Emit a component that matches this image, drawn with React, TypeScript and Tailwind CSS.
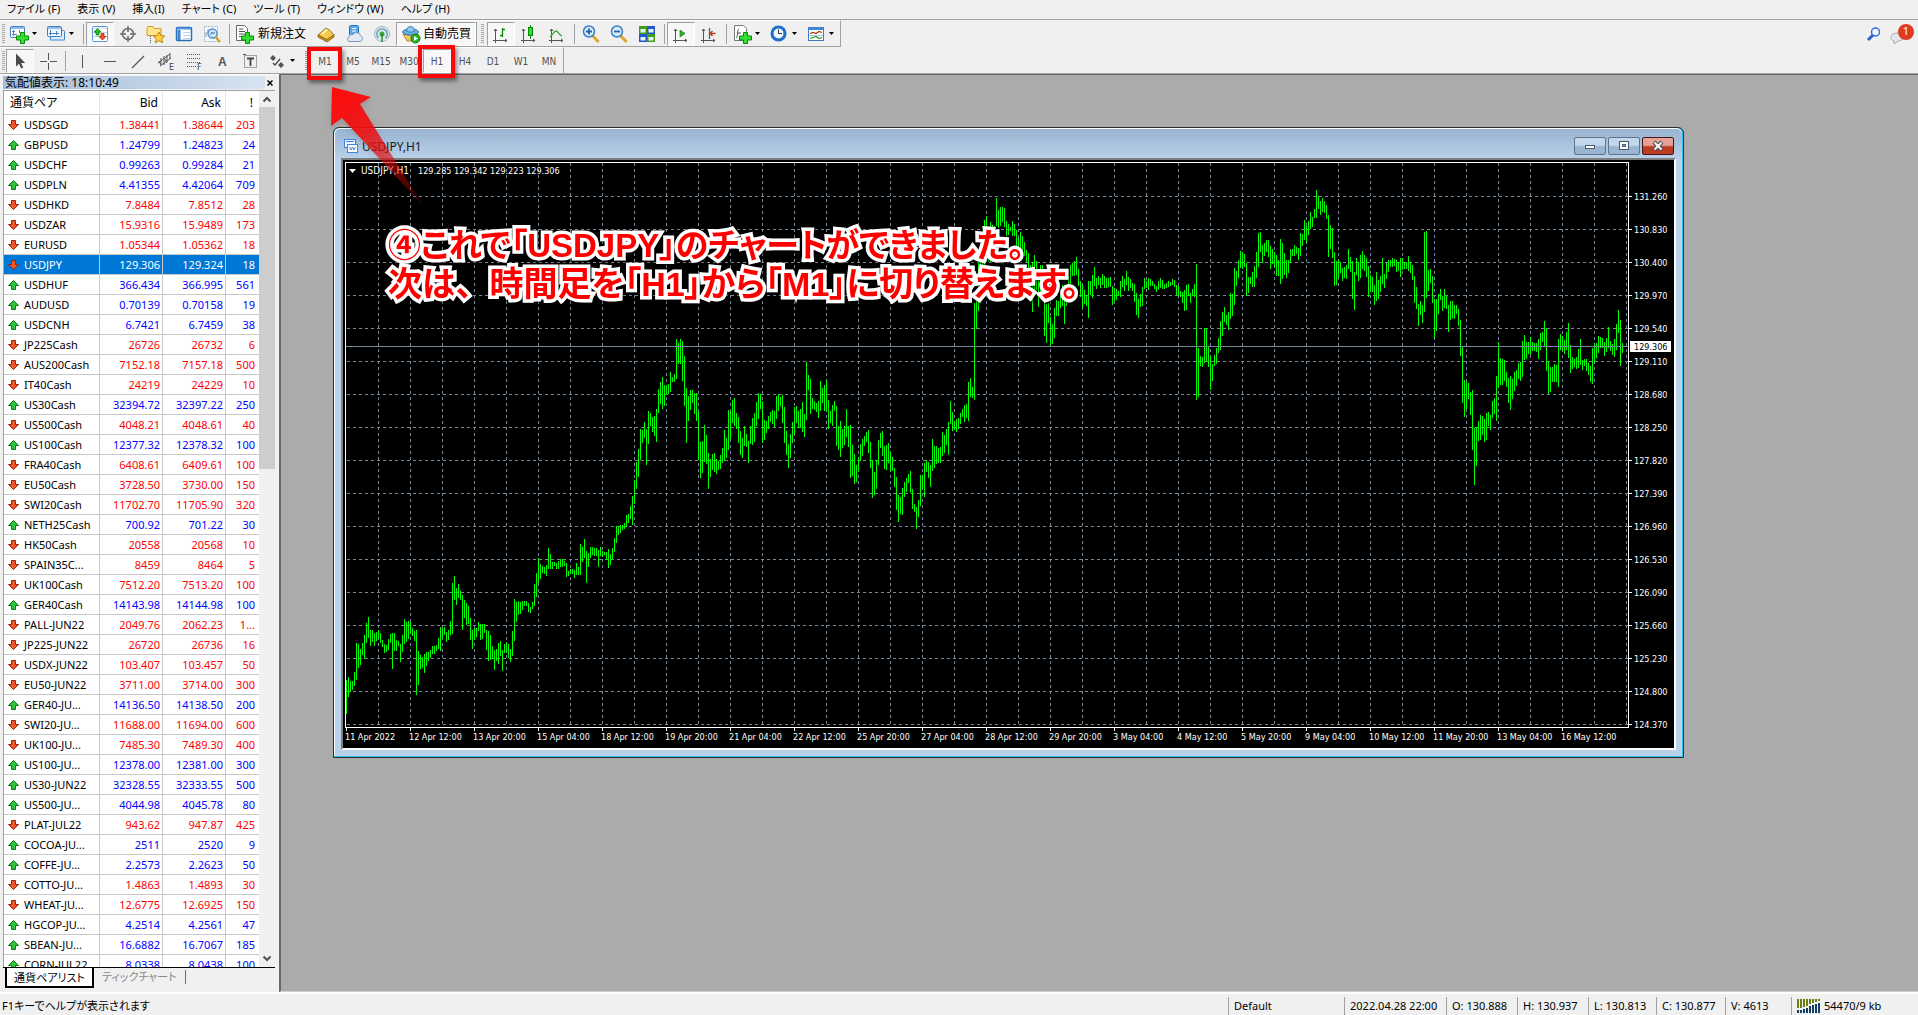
import type { ReactNode } from 'react'
import clsx from 'clsx'

const MENU = ['ファイル (F)', '表示 (V)', '挿入(I)', 'チャート (C)', 'ツール (T)', 'ウィンドウ (W)', 'ヘルプ (H)']

const TIMEFRAMES = ['M1', 'M5', 'M15', 'M30', 'H1', 'H4', 'D1', 'W1', 'MN']

type Quote = [dir: 'u' | 'd', symbol: string, bid: string, ask: string, spread: string]

const QUOTES: Quote[] = [
  ['d', 'USDSGD', '1.38441', '1.38644', '203'],
  ['u', 'GBPUSD', '1.24799', '1.24823', '24'],
  ['u', 'USDCHF', '0.99263', '0.99284', '21'],
  ['u', 'USDPLN', '4.41355', '4.42064', '709'],
  ['d', 'USDHKD', '7.8484', '7.8512', '28'],
  ['d', 'USDZAR', '15.9316', '15.9489', '173'],
  ['d', 'EURUSD', '1.05344', '1.05362', '18'],
  ['d', 'USDJPY', '129.306', '129.324', '18'],
  ['u', 'USDHUF', '366.434', '366.995', '561'],
  ['u', 'AUDUSD', '0.70139', '0.70158', '19'],
  ['u', 'USDCNH', '6.7421', '6.7459', '38'],
  ['d', 'JP225Cash', '26726', '26732', '6'],
  ['d', 'AUS200Cash', '7152.18', '7157.18', '500'],
  ['d', 'IT40Cash', '24219', '24229', '10'],
  ['u', 'US30Cash', '32394.72', '32397.22', '250'],
  ['d', 'US500Cash', '4048.21', '4048.61', '40'],
  ['u', 'US100Cash', '12377.32', '12378.32', '100'],
  ['d', 'FRA40Cash', '6408.61', '6409.61', '100'],
  ['d', 'EU50Cash', '3728.50', '3730.00', '150'],
  ['d', 'SWI20Cash', '11702.70', '11705.90', '320'],
  ['u', 'NETH25Cash', '700.92', '701.22', '30'],
  ['d', 'HK50Cash', '20558', '20568', '10'],
  ['d', 'SPAIN35C...', '8459', '8464', '5'],
  ['d', 'UK100Cash', '7512.20', '7513.20', '100'],
  ['u', 'GER40Cash', '14143.98', '14144.98', '100'],
  ['d', 'PALL-JUN22', '2049.76', '2062.23', '1...'],
  ['d', 'JP225-JUN22', '26720', '26736', '16'],
  ['d', 'USDX-JUN22', '103.407', '103.457', '50'],
  ['d', 'EU50-JUN22', '3711.00', '3714.00', '300'],
  ['u', 'GER40-JU...', '14136.50', '14138.50', '200'],
  ['d', 'SWI20-JU...', '11688.00', '11694.00', '600'],
  ['d', 'UK100-JU...', '7485.30', '7489.30', '400'],
  ['u', 'US100-JU...', '12378.00', '12381.00', '300'],
  ['u', 'US30-JUN22', '32328.55', '32333.55', '500'],
  ['u', 'US500-JU...', '4044.98', '4045.78', '80'],
  ['d', 'PLAT-JUL22', '943.62', '947.87', '425'],
  ['u', 'COCOA-JU...', '2511', '2520', '9'],
  ['u', 'COFFE-JU...', '2.2573', '2.2623', '50'],
  ['d', 'COTTO-JU...', '1.4863', '1.4893', '30'],
  ['d', 'WHEAT-JU...', '12.6775', '12.6925', '150'],
  ['u', 'HGCOP-JU...', '4.2514', '4.2561', '47'],
  ['u', 'SBEAN-JU...', '16.6882', '16.7067', '185'],
  ['u', 'CORN-JUL22', '8.0338', '8.0438', '100'],
]

const PRICES = [
  '131.260', '130.830', '130.400', '129.970', '129.540', '129.110', '128.680', '128.250', '127.820',
  '127.390', '126.960', '126.530', '126.090', '125.660', '125.230', '124.800', '124.370',
]

const DATES = [
  '11 Apr 2022', '12 Apr 12:00', '13 Apr 20:00', '15 Apr 04:00', '18 Apr 12:00', '19 Apr 20:00', '21 Apr 04:00',
  '22 Apr 12:00', '25 Apr 20:00', '27 Apr 04:00', '28 Apr 12:00', '29 Apr 20:00', '3 May 04:00', '4 May 12:00',
  '5 May 20:00', '9 May 04:00', '10 May 12:00', '11 May 20:00', '13 May 04:00', '16 May 12:00',
]

// high-low pair per hourly bar, in chart units; one line per grid column
const BARS = `
680-714 677-697 681-692 681-690 672-686 643-680 644-668 649-665 643-655 635-659 623-643 617-638 630-646 630-642 633-646 632-641
630-639 633-643 640-647 644-653 645-652 639-650 634-643 633-669 633-651 640-651 641-646 644-662 635-652 619-644 622-642 621-639
622-634 628-636 631-641 630-695 651-685 655-669 657-668 654-673 652-666 652-661 650-658 646-654 646-654 645-651 638-649 627-651
628-639 627-635 632-642 630-640 621-635 583-634 576-600 588-605 584-598 591-600 595-630 600-618 603-625 606-624 618-640 630-649
628-640 628-637 622-631 624-640 624-639 624-633 630-650 631-661 635-660 646-659 650-670 649-661 643-664 641-656 650-671 644-653
642-653 644-658 649-662 631-656 599-641 602-622 601-615 602-614 601-610 601-606 601-606 603-612 607-613 602-609 584-606 573-597
558-583 564-579 566-573 567-574 565-576 548-569 554-569 562-569 562-566 563-569 561-569 559-567 559-567 561-566 563-577 571-576
569-574 569-574 570-578 563-575 567-575 544-575 547-562 539-558 551-583 553-567 547-558 547-555 548-556 548-556 550-567 547-556
551-557 552-555 552-560 549-568 554-565 548-559 538-552 526-543 526-535 525-533 525-530 523-529 515-527 514-523 506-519 496-525
480-504 462-489 449-477 429-460 430-443 422-438 429-465 411-444 413-426 417-432 416-436 409-442 389-413 382-404 377-409 385-406
385-394 384-394 372-392 377-382 374-382 339-379 343-364 339-364 341-381 356-406 388-443 396-421 390-410 390-403 393-414 393-421
412-460 442-478 441-473 425-462 435-464 453-489 459-477 454-470 453-472 459-474 461-470 455-469 448-463 430-461 438-458 410-450
412-439 400-423 398-426 413-429 417-443 431-455 438-458 426-446 434-447 441-463 426-444 418-445 413-442 402-426 393-419 394-409
401-443 420-440 421-433 416-429 412-422 410-424 411-427 396-419 394-411 397-406 395-423 407-443 431-455 444-468 434-458 422-443
407-434 406-423 411-428 409-428 402-432 414-437 362-420 375-390 379-414 398-409 401-410 403-412 401-418 381-411 388-403 385-411
380-411 400-429 411-423 405-426 401-411 406-446 426-450 421-457 429-448 426-445 409-437 426-447 425-478 445-476 454-484 465-482
457-471 444-461 439-456 436-446 432-442 430-453 442-468 460-498 472-495 460-489 440-465 433-448 431-456 446-469 445-470 443-463
452-472 457-471 468-487 477-510 495-522 497-514 488-515 482-497 478-492 474-483 471-493 489-509 504-512 507-529 500-517 475-506
475-489 463-497 460-472 462-478 465-487 439-471 446-468 446-464 448-463 447-463 432-456 435-453 429-445 422-455 401-424 412-431
421-430 419-432 418-429 413-424 409-417 405-422 404-418 382-421 378-397 387-398 303-400 301-329 260-311 250-290 240-290 220-265
216-250 230-262 222-262 225-262 226-250 198-226 210-228 207-226 207-222 208-227 221-236 224-235 227-231 221-236 224-236 230-246
238-252 232-250 236-250 242-256 250-262 253-280 265-290 262-312 255-290 261-290 270-307 265-296 265-290 280-336 304-343 303-323
317-346 324-344 308-338 300-316 301-316 295-308 285-306 285-324 290-306 276-294 265-284 263-276 261-276 257-275 269-286 281-297
285-308 290-304 295-306 281-318 281-295 275-298 267-286 278-289 276-285 278-288 274-285 276-288 278-288 278-287 277-287 286-305
288-302 289-300 291-296 281-297 276-287 279-291 271-285 277-291 279-288 283-291 284-302 293-315 299-318 294-307 287-306 278-289
281-288 278-290 279-286 281-286 284-289 286-292 281-290 278-288 280-289 284-289 283-288 281-287 282-286 279-285 280-287 285-295
286-296 291-297 292-303 290-311 285-310 284-296 293-303 289-296 284-297 264-400 348-397 356-366 357-367 328-363 328-361 347-367
357-390 364-381 355-366 348-364 338-353 321-350 312-336 307-322 315-325 312-330 293-319 294-316 268-305 271-286 260-278 251-268
252-269 254-267 263-296 277-293 277-284 272-287 266-287 252-278 233-267 232-252 245-263 243-256 240-252 240-257 246-269 249-264
252-267 255-276 260-276 239-284 243-279 253-275 260-278 260-273 249-263 249-256 245-256 247-254 248-260 233-256 234-246 220-240
226-243 221-235 212-229 217-227 209-218 190-218 196-209 201-215 198-212 201-213 205-219 215-257 225-249 228-258 252-286 261-285
260-278 262-273 268-281 267-278 265-279 249-269 257-272 261-299 272-310 258-275 262-281 255-278 251-269 255-271 258-277 266-297
275-292 277-292 285-305 272-301 280-299 276-292 258-284 274-288 263-279 260-272 260-267 258-267 259-266 260-272 262-271 258-277
258-270 262-269 262-269 256-271 262-273 265-280 276-303 287-309 304-326 301-315 305-323 232-312 231-298 270-291 269-283 276-303
299-338 299-331 294-314 289-300 296-311 289-308 296-309 305-332 301-320 301-318 305-319 305-314 309-326 320-356 346-403 380-417
382-409 383-399 392-415 390-450 428-485 427-466 421-441 415-440 416-435 419-442 413-440 412-426 415-430 401-418 398-414 376-421
342-388 358-385 359-385 360-381 372-387 378-403 376-410 379-399 372-391 370-386 363-379 362-381 341-377 335-360 342-359 342-354
337-355 342-351 343-351 343-352 339-359 333-350 332-342 321-346 328-371 362-394 367-392 367-382 364-382 365-382 339-387 334-350
336-351 340-354 332-350 323-358 345-373 357-369 359-367 357-369 349-368 339-365 360-370 359-366 359-371 363-375 366-382 348-384
343-363 343-358 336-353 337-348 338-348 342-356 338-352 327-348 341-351 344-355 339-357 324-350 310-333 320-366 343-353
`
  .trim()
  .split(/\s+/)
  .map(pair => pair.split('-').map(Number))

function Icon({ children, size = 20 }: { children: ReactNode; size?: number }) {
  return (
    <svg width={size} height={size} viewBox="0 0 20 20" fill="none" aria-hidden="true" className="shrink-0">
      {children}
    </svg>
  )
}

const Plus = () => (
  <path d="M11.500 8.500h4v3.500h4v4h-4v3.500h-4V16h-4v-4h4z" fill="#35dd35" stroke="#078a07" />
)

const Axes = () => <path d="M4.500 5v14M2 16.500h14M3 7l1.500-2L6 7M14 15l2 1.500-2 1.500" stroke="#555" />

const ICONS = {
  newChart: (
    <Icon>
      <rect x="1.5" y="2.5" width="14" height="11" rx="1" fill="#fff" stroke="#3f7fbf" />
      <path d="M2 4h13" stroke="#8fbce8" strokeWidth="2" />
      <path d="M4.500 6v6M3 7.500h3M3 10.500h5M10.500 6v3" stroke="#4a80b5" />
      <Plus />
    </Icon>
  ),
  profiles: (
    <Icon>
      <rect x="4.500" y="6.500" width="14" height="10" rx="1" fill="#dcebfa" stroke="#3f7fbf" />
      <rect x="1.500" y="2.500" width="14" height="10" rx="1" fill="#eef6ff" stroke="#3f7fbf" />
      <path d="M2 4h13M5 16h13" stroke="#8fbce8" strokeWidth="2" />
      <path d="M4.500 6v5M3 9.500h10M10.500 7v4" stroke="#4a80b5" />
    </Icon>
  ),
  market: (
    <Icon>
      <rect x="2.500" y="2.500" width="15" height="15" rx="1" fill="#fff" stroke="#5f9ad6" />
      <path d="M3 4h14M3 8.500h14M3 12.500h14" stroke="#bcd9f2" />
      <path d="M7.500 4.500L11 8H9v3H6V8H4z" fill="#27c227" stroke="#0a7d0a" strokeWidth=".8" />
      <path d="M12.500 16L9 12.500h2v-3h3v3h2z" fill="#f0552a" stroke="#b02a08" strokeWidth=".8" />
    </Icon>
  ),
  target: (
    <Icon>
      <circle cx="10" cy="10" r="5.500" fill="#eee" stroke="#6a6a6a" strokeWidth="1.500" />
      <path d="M10 2v6M10 12v6M2 10h6M12 10h6" stroke="#6a6a6a" strokeWidth="1.500" />
    </Icon>
  ),
  favorites: (
    <Icon>
      <path d="M1 4.500l1-2h5l1.500 2H15v7H1z" fill="#ffe48a" stroke="#c89a2c" />
      <path d="M4.500 12v7" stroke="#555" strokeDasharray="1 1" />
      <path d="M13 8l1.800 3.500 4 .5-3 2.700.8 4-3.600-2-3.600 2 .8-4-3-2.700 4-.500z" fill="#ffd23c" stroke="#bd8415" />
    </Icon>
  ),
  data: (
    <Icon>
      <rect x="2.500" y="3.500" width="15" height="13" rx="1" fill="#fff" stroke="#2b6fba" strokeWidth="1.500" />
      <path d="M3 4.500h14" stroke="#4f92dd" strokeWidth="2" />
      <path d="M5 6v10" stroke="#3d82cf" strokeWidth="3" />
      <path d="M9 8.500h7M9 11.500h7M9 14.500h7" stroke="#b7d4f0" />
    </Icon>
  ),
  tester: (
    <Icon>
      <path d="M2.500 2.500h13v15h-13z" fill="#f6f9fc" stroke="#9bb4cc" strokeDasharray="2 1" />
      <path d="M4 13V8M6 10V5" stroke="#7f9ab5" />
      <circle cx="10.500" cy="9.500" r="4.500" fill="#cfe6fa" stroke="#4b8bc8" strokeWidth="1.300" />
      <path d="M8.500 11l1.500-3 1.500 2 1-2" stroke="#4d7ba5" />
      <path d="M13.500 13l4.500 5" stroke="#d9a322" strokeWidth="2.500" />
    </Icon>
  ),
  newOrder: (
    <Icon>
      <path d="M2.500 1.500h8l3 3v12h-11z" fill="#fff" stroke="#666" />
      <path d="M5 5h4M5 7.500h6M5 10h6M5 12.500h4" stroke="#555" />
      <Plus />
    </Icon>
  ),
  gold: (
    <Icon>
      <path d="M2 11l8-7 4 2.500 4 4.500-7 6z" fill="#f5cb4d" stroke="#a87412" />
      <path d="M2 11l9 4.500 7-5v2.500l-7 5-9-5z" fill="#c48a1a" stroke="#8d6010" strokeWidth=".8" />
      <path d="M6 10l5-4.500" stroke="#fff3b8" strokeWidth="2" />
    </Icon>
  ),
  cloud: (
    <Icon>
      <rect x="5.500" y="1.500" width="9" height="10" rx="1" fill="#58a8ee" stroke="#2a72b8" />
      <path d="M8 4.500h4M8 7h4" stroke="#fff" />
      <path d="M5 17.500h11a3 3 0 00.5-5.800 4 4 0 00-7.500-1 3 3 0 00-4 2.300 2.500 2.500 0 000 4.500z" fill="#e3eaf5" stroke="#8397b5" />
    </Icon>
  ),
  signal: (
    <Icon>
      <circle cx="10" cy="10" r="7.500" fill="#d9e9ee" stroke="#a3b9c4" />
      <path d="M6.500 14a5.200 5.200 0 117 0" stroke="#5f95b5" strokeWidth="1.300" />
      <circle cx="10" cy="10" r="2.500" fill="#3aa53a" />
      <path d="M10 10v8" stroke="#2c8c2c" strokeWidth="1.500" />
    </Icon>
  ),
  auto: (
    <Icon>
      <path d="M2 10l8 2 7-2-2 7H6z" fill="#f2cd5c" stroke="#b58a22" />
      <ellipse cx="9.500" cy="8" rx="8" ry="3" fill="#69b2e8" stroke="#2f79b5" />
      <path d="M5.500 7c0-6 8-6 8 0-2 1.500-6 1.500-8 0z" fill="#8ccaf4" stroke="#2f79b5" />
      <circle cx="14.500" cy="14.500" r="4.500" fill="#23b523" stroke="#0d780d" />
      <path d="M13 12v5l4-2.500z" fill="#fff" />
    </Icon>
  ),
  bars: (
    <Icon>
      <Axes />
      <path d="M11.500 4v9M9 11.500h2.500M11.500 5.500H14" stroke="#078a07" strokeWidth="1.300" />
    </Icon>
  ),
  candles: (
    <Icon>
      <Axes />
      <path d="M11.500 1v14" stroke="#078a07" />
      <rect x="9.500" y="3.500" width="4" height="8" fill="#2fd83f" stroke="#078a07" />
    </Icon>
  ),
  line: (
    <Icon>
      <Axes />
      <path d="M3 13c3-2 4-6 6-6s3 4 6 5" stroke="#3aa53a" strokeWidth="1.300" />
    </Icon>
  ),
  zoomIn: (
    <Icon>
      <path d="M11 11l6.500 7" stroke="#d8a92a" strokeWidth="3" />
      <circle cx="8" cy="7.500" r="5.500" fill="#d7ecfb" stroke="#3b7fc4" strokeWidth="1.500" />
      <path d="M5 7.500h6M8 4.500v6" stroke="#2864a8" strokeWidth="1.800" />
    </Icon>
  ),
  zoomOut: (
    <Icon>
      <path d="M11 11l6.500 7" stroke="#d8a92a" strokeWidth="3" />
      <circle cx="8" cy="7.500" r="5.500" fill="#d7ecfb" stroke="#3b7fc4" strokeWidth="1.500" />
      <path d="M5 7.500h6" stroke="#2864a8" strokeWidth="1.800" />
    </Icon>
  ),
  tile: (
    <Icon>
      <path d="M2 2h8v8H2zM10 10h8v8h-8z" fill="#3f9c1c" />
      <path d="M10 2h8v8h-8zM2 10h8v8H2z" fill="#2257c9" />
      <path d="M3.500 5h5v3.500h-5zM11.500 5h5v3.500h-5zM3.500 13h5v3.500h-5zM11.500 13h5v3.500h-5z" fill="#e7f2e7" />
    </Icon>
  ),
  scroll: (
    <Icon>
      <Axes />
      <path d="M9 6v7l5-3.500z" fill="#27b53a" stroke="#078a07" strokeWidth=".7" />
    </Icon>
  ),
  shift: (
    <Icon>
      <Axes />
      <path d="M10.500 4v11" stroke="#2c68ac" strokeWidth="1.300" />
      <path d="M16.500 9.500h-5M13.500 7L11 9.500l2.500 2.500" stroke="#c0390f" strokeWidth="1.300" />
    </Icon>
  ),
  indicators: (
    <Icon>
      <path d="M2.500 1.500h9l3 3v12h-12z" fill="#fff" stroke="#777" />
      <path d="M7 5c-2 0-1 9-3 9M5 9h4" stroke="#555" />
      <Plus />
    </Icon>
  ),
  clock: (
    <Icon>
      <circle cx="9.500" cy="9.500" r="6.500" fill="#eef5fd" stroke="#1f6fcb" strokeWidth="3" />
      <path d="M9.500 5.500v4H13" stroke="#333" />
    </Icon>
  ),
  template: (
    <Icon>
      <rect x="2.500" y="3.500" width="15" height="13" fill="#fff" stroke="#3f7fbf" />
      <path d="M2.500 4.500h15" stroke="#3f86d2" strokeWidth="3" />
      <path d="M4 9.500l3-1 3 1 3-2 3 1" stroke="#a03818" strokeWidth="1.300" />
      <path d="M4 14.500l3-1 3-1 3 2 3-1" stroke="#2c9c2c" strokeWidth="1.300" />
      <path d="M3 11.500h14" stroke="#a9c6e4" />
    </Icon>
  ),
  cursor: (
    <Icon>
      <path d="M6 2.500v13l3-2.800 2.200 4.800 2-1-2-4.500h4z" fill="#4a4a4a" />
    </Icon>
  ),
  cross: (
    <Icon>
      <path d="M10.500 2v7M10.500 12v7M2 10.500h7M12 10.500h7" stroke="#555" />
    </Icon>
  ),
  vline: (
    <Icon>
      <path d="M10.500 4v13" stroke="#555" />
    </Icon>
  ),
  hline: (
    <Icon>
      <path d="M4 10.500h12" stroke="#555" />
    </Icon>
  ),
  trend: (
    <Icon>
      <path d="M4 17L16 5" stroke="#555" strokeWidth="1.200" />
    </Icon>
  ),
  channel: (
    <Icon>
      <path d="M2 12L14 3M4 15l11-8M5 7v6M8 5v9M11 4v7M14 2v6M3 10l2 4M9 8l2 4" stroke="#555" />
      <text x="13" y="19" fontSize="8" fill="#444" className="font-['DejaVu_Sans']">E</text>
    </Icon>
  ),
  fibo: (
    <Icon>
      <path d="M3 3.500h14M3 7.500h14M3 11.500h14M3 15.500h9" stroke="#555" strokeDasharray="1 1" />
      <text x="13" y="19" fontSize="8" fill="#444" className="font-['DejaVu_Sans']">F</text>
    </Icon>
  ),
  text: (
    <Icon>
      <text x="6" y="15" fontSize="12" fontWeight="700" fill="#555" className="font-['Liberation_Sans']">A</text>
    </Icon>
  ),
  label: (
    <Icon>
      <rect x="4.500" y="4.500" width="12" height="12" stroke="#555" strokeDasharray="1 1" />
      <path d="M3 3h3v1H3z" fill="#555" />
      <path d="M7 7.500h7M10.500 7v8" stroke="#444" strokeWidth="1.800" />
    </Icon>
  ),
  arrows: (
    <Icon>
      <path d="M6 4l3 3-3 3-3-3zM14 11l3 3-3 3-3-3z" fill="#555" />
      <path d="M6 12l2 2 5-6" stroke="#444" strokeWidth="1.300" />
    </Icon>
  ),
}

type IconName = keyof typeof ICONS

function Tool({ icon, pressed, menu }: { icon: IconName; pressed?: boolean; menu?: boolean }) {
  return (
    <button
      type="button"
      aria-label={icon}
      className={clsx(
        'flex h-6 items-center',
        menu ? 'w-[37px] pl-[3px]' : 'w-7 justify-center',
        pressed && 'border border-t-[#a0a0a0] border-r-white border-b-white border-l-[#a0a0a0] bg-[#f7f7f7]',
      )}
    >
      {ICONS[icon]}
      {menu && <Caret />}
    </button>
  )
}

function Caret() {
  return (
    <svg width="7" height="4" viewBox="0 0 7 4" aria-hidden="true" className="ml-0.5">
      <path d="M1 0h5L3.500 3z" fill="#000" />
    </svg>
  )
}

function Sep() {
  return (
    <span className="flex h-6 w-1.5 justify-center py-0.5">
      <span className="w-px bg-[#a0a0a0]" />
    </span>
  )
}

function Grip({ wide }: { wide?: boolean }) {
  return (
    <span className={clsx('flex h-6 justify-center py-0.5', wide ? 'w-2.5' : 'w-1.5')}>
      <span className="w-[3px] bg-[repeating-linear-gradient(to_bottom,#a9a9a9_0_1px,#f0f0f0_1px_2px)]" />
    </span>
  )
}

function MenuBar() {
  return (
    <nav className="flex h-[19px] items-center gap-[17px] px-[7px] text-[11px]">
      {MENU.map(item => (
        <button key={item} type="button" className="whitespace-nowrap">
          {item}
        </button>
      ))}
    </nav>
  )
}

function MainToolbar() {
  return (
    <div className="flex justify-between border-t border-[#a0a0a0]">
      <div className="flex h-[27px] items-center border-t border-r border-b border-t-white border-r-[#a0a0a0] border-b-[#a0a0a0] text-[12px]">
        <Grip />
        <Tool icon="newChart" menu />
        <Tool icon="profiles" menu />
        <Sep />
        <Tool icon="market" pressed />
        <Tool icon="target" />
        <Tool icon="favorites" />
        <Tool icon="data" />
        <Tool icon="tester" />
        <Sep />
        <button type="button" className="flex h-6 w-20 items-center gap-1 pl-0.5 whitespace-nowrap">
          {ICONS.newOrder}
          新規注文
        </button>
        <Tool icon="gold" />
        <Tool icon="cloud" />
        <Tool icon="signal" />
        <button
          type="button"
          className="flex h-6 w-20 items-center gap-0.5 border border-t-[#a0a0a0] border-r-white border-b-white border-l-[#a0a0a0] bg-[#f7f7f7] pl-1 whitespace-nowrap"
        >
          {ICONS.auto}
          自動売買
        </button>
        <span className="h-6 border-l border-[#a0a0a0]" />
        <Grip wide />
        <Tool icon="bars" pressed />
        <Tool icon="candles" />
        <Tool icon="line" />
        <Sep />
        <Tool icon="zoomIn" />
        <Tool icon="zoomOut" />
        <Tool icon="tile" />
        <Sep />
        <Tool icon="scroll" pressed />
        <Tool icon="shift" />
        <Sep />
        <Tool icon="indicators" menu />
        <Tool icon="clock" menu />
        <Tool icon="template" menu />
      </div>
      <div className="flex items-center gap-2 pr-1">
        <button type="button" aria-label="search">
          <svg width="16" height="16" viewBox="0 0 16 16" fill="none">
            <path d="M2 14l5-5" stroke="#2a62c9" strokeWidth="3" />
            <circle cx="9.500" cy="6" r="4" fill="#f4f8ff" stroke="#2f6ae0" strokeWidth="1.500" />
          </svg>
        </button>
        <button type="button" aria-label="messages" className="relative flex h-6 w-6 items-end">
          <svg width="14" height="16" viewBox="0 0 14 16">
            <path d="M7 3c8 0 8 8 1 8l-4 3v-3C-1 10 0 3 7 3z" fill="#e4e6ea" stroke="#a8acb4" />
          </svg>
          <span className="absolute top-0.5 right-0 flex size-4 items-center justify-center rounded-full bg-[#e03a22] text-[11px] text-white">
            1
          </span>
        </button>
      </div>
    </div>
  )
}

function DrawToolbar() {
  return (
    <div className="flex h-[27px] border-b border-[#a0a0a0]">
      <div className="flex items-center border-t border-r border-t-white border-r-[#a0a0a0]">
        <Grip />
        <Tool icon="cursor" pressed />
        <Tool icon="cross" />
        <Sep />
        <Tool icon="vline" />
        <Tool icon="hline" />
        <Tool icon="trend" />
        <Tool icon="channel" />
        <Tool icon="fibo" />
        <Tool icon="text" />
        <Tool icon="label" />
        <Tool icon="arrows" menu />
        <Grip wide />
        {TIMEFRAMES.map(tf => (
          <button
            key={tf}
            type="button"
            className={clsx(
              "h-6 w-7 pt-0.5 text-center font-['DejaVu_Sans_Condensed','DejaVu_Sans',sans-serif] text-[10px] text-[#505050]",
              tf === 'H1' && 'border border-t-[#a0a0a0] border-r-white border-b-white border-l-[#a0a0a0] bg-[#f7f7f7]',
            )}
          >
            {tf}
          </button>
        ))}
      </div>
    </div>
  )
}

function DirIcon({ dir }: { dir: 'u' | 'd' }) {
  return (
    <svg width="11" height="10" viewBox="0 0 11 10" aria-label={dir === 'u' ? 'up' : 'down'} className="shrink-0">
      {dir === 'u' ? (
        <path d="M5.500.5l5 5H7.500v4h-4v-4H.5z" fill="#2fc43c" stroke="#0c7a16" />
      ) : (
        <path d="M5.500 9.500l5-5H7.500v-4h-4v4H.5z" fill="#f0562b" stroke="#9c2405" />
      )}
    </svg>
  )
}

function ScrollBar() {
  return (
    <div className="flex w-4 flex-col items-center bg-[#f0f0f0]">
      <svg width="16" height="16" viewBox="0 0 16 16" fill="none" aria-hidden="true">
        <path d="M4.500 10.500L8 7l3.500 3.500" stroke="#505050" strokeWidth="2" />
      </svg>
      <div className="h-[362px] w-full bg-[#cdcdcd]" />
      <svg width="16" height="16" viewBox="0 0 16 16" fill="none" aria-hidden="true" className="mt-auto">
        <path d="M4.500 5.500L8 9l3.500-3.500" stroke="#505050" strokeWidth="2" />
      </svg>
    </div>
  )
}

function MarketWatch() {
  return (
    <aside className="flex w-[279px] shrink-0 flex-col border-t border-white pr-1 pl-[3px]">
      <div className="flex h-[15px] items-center">
        <h2 className="h-[13px] flex-1 bg-gradient-to-r from-[#a3bcd8] to-[#d7e3f0] pl-0.5 text-[12px] leading-[13px]">
          気配値表示: 18:10:49
        </h2>
        <button type="button" aria-label="close" className="flex w-2.5 justify-center">
          <svg width="6" height="6" viewBox="0 0 6 6">
            <path d="M.5.5l5 5M5.500.5l-5 5" stroke="#000" strokeWidth="1.500" />
          </svg>
        </button>
      </div>
      <div className="flex min-h-0 flex-1 overflow-hidden border-t border-l border-[#a0a0a0] bg-white">
        <div className="flex-1 overflow-hidden">
          <table className="w-full table-fixed border-separate border-spacing-0 text-[11px]">
            <colgroup>
              <col className="w-24" />
              <col className="w-[63px]" />
              <col className="w-[63px]" />
              <col />
            </colgroup>
            <thead>
              <tr className="text-[12px]">
                <th className="h-6 border-r border-b border-r-[#e5e5e5] border-b-[#c8c8c8] pl-1.5 text-left font-normal">
                  通貨ペア
                </th>
                <th className="border-r border-b border-r-[#e5e5e5] border-b-[#c8c8c8] pr-1 text-right font-normal">Bid</th>
                <th className="border-r border-b border-r-[#e5e5e5] border-b-[#c8c8c8] pr-1 text-right font-normal">Ask</th>
                <th className="border-b border-[#c8c8c8] pr-1.5 text-right font-normal">!</th>
              </tr>
            </thead>
            <tbody>
              {QUOTES.map(([dir, symbol, bid, ask, spread]) => {
                const selected = symbol === 'USDJPY'
                const color = selected ? 'text-white' : dir === 'u' ? 'text-[#0000ff]' : 'text-[#ff0000]'
                return (
                  <tr key={symbol} className={clsx(selected && 'bg-[#0078d7]')}>
                    <td className="h-5 border-r border-b border-[#c8c8c8] p-0 leading-[19px]">
                      <div className={clsx('flex items-center gap-[5px] pl-1 whitespace-nowrap', selected && 'text-white')}>
                        <DirIcon dir={dir} />
                        {symbol}
                      </div>
                    </td>
                    <td className={clsx('border-r border-b border-[#c8c8c8] p-0 pr-0.5 text-right leading-[19px]', color)}>{bid}</td>
                    <td className={clsx('border-r border-b border-[#c8c8c8] p-0 pr-0.5 text-right leading-[19px]', color)}>{ask}</td>
                    <td className={clsx('border-b border-[#c8c8c8] p-0 pr-1 text-right leading-[19px]', color)}>{spread}</td>
                  </tr>
                )
              })}
            </tbody>
          </table>
        </div>
        <ScrollBar />
      </div>
      <div className="flex h-[25px] items-start border-t border-black text-[11px]">
        <button type="button" className="ml-0.5 h-5 w-[89px] border-r-2 border-b-2 border-l-2 border-black bg-white leading-[17px] whitespace-nowrap">
          通貨ペアリスト
        </button>
        <button type="button" className="mt-0.5 ml-2 border-r border-[#6d6d6d] pr-2 leading-[14px] whitespace-nowrap text-[#8a8a8a]">
          ティックチャート
        </button>
      </div>
    </aside>
  )
}

function Chart() {
  const cols = Array.from({ length: 40 }, (_, i) => 378 + i * 32)
  return (
    <svg viewBox="343 160 1331 588" className="block w-full bg-black" role="img" aria-label="USDJPY,H1">
      <g shapeRendering="crispEdges">
        <g stroke="#778899" strokeDasharray="3 3">
          {cols.map(x => (
            <path key={x} d={`M${x}.5 163V727`} />
          ))}
          {PRICES.map((p, i) => (
            <path key={p} d={`M347 ${196 + i * 33}.5H1628`} />
          ))}
        </g>
        <path d={BARS.map(([hi, lo], i) => `M${346 + i * 2}.5 ${hi}V${lo}`).join('')} stroke="#00ff00" />
        <path d="M346 346.500H1628" stroke="#778899" />
        <path d="M345.500 727.500V162.500H1628.500V727.500H345.500" stroke="#fff" fill="none" />
        {PRICES.map((p, i) => (
          <path key={p} d={`M1629 ${196 + i * 33}.5h3`} stroke="#fff" />
        ))}
        {DATES.map((d, i) => (
          <path key={d} d={`M${346 + i * 64}.5 728v3`} stroke="#fff" />
        ))}
        <rect x="1630" y="341" width="41" height="11" fill="#fff" />
      </g>
      <g fill="#fff" fontSize="9" className="font-['DejaVu_Sans_Condensed','DejaVu_Sans',sans-serif]">
        {PRICES.map((p, i) => (
          <text key={p} x="1634" y={200 + i * 33}>{p}</text>
        ))}
        {DATES.map((d, i) => (
          <text key={d} x={345 + i * 64} y="740">{d}</text>
        ))}
        <path d="M349 169h7l-3.500 4z" />
        <text x="361" y="174" fontSize="10">USDJPY,H1</text>
        <text x="418" y="174">129.285 129.342 129.223 129.306</text>
        <text x="1634" y="350" fill="#000">129.306</text>
      </g>
    </svg>
  )
}

function WindowButton({ label, danger, children }: { label: string; danger?: boolean; children: ReactNode }) {
  return (
    <button
      type="button"
      aria-label={label}
      className={clsx(
        'flex h-[18px] w-8 items-center justify-center rounded-xs border',
        danger
          ? 'border-[#43141a] bg-gradient-to-b from-[#e6a296] from-45% to-[#bb3b23] to-55%'
          : 'border-[#5f7389] bg-gradient-to-b from-[#c3d6ea] from-45% to-[#9ab5d2] to-55%',
      )}
    >
      <svg width="14" height="12" viewBox="0 0 14 12" fill="none">
        {children}
      </svg>
    </button>
  )
}

function ChartWindow() {
  return (
    <section className="absolute top-[52px] left-[52px] w-[1351px] rounded-t-md border border-[#2b2b2b] bg-[#29c4ef]">
      <div className="mr-px mb-px rounded-t-md border-t border-l border-white bg-[#b9d1ea] bg-gradient-to-b from-[#99b4d1] to-[#b9d1ea] to-[30px] px-1.5 pb-1.5">
        <header className="flex h-[29px] items-center pt-1">
          <svg width="16" height="16" viewBox="0 0 16 16" fill="none" aria-hidden="true" className="ml-0.5">
            <rect x="1.500" y="1.500" width="11" height="8" fill="#eef5ff" stroke="#3f83dd" />
            <rect x="4.500" y="6.500" width="10" height="8" fill="#fff" stroke="#3f83dd" />
            <path d="M3 3.500h8M6.500 9l1.500 3 1.500-3 1.500 3 1.500-3" stroke="#3f83dd" />
          </svg>
          <h1 className="ml-[3px] pt-0.5 text-[12px] text-[#1a1a1a]">USDJPY,H1</h1>
          <div className="mr-0.5 ml-auto flex gap-0.5">
            <WindowButton label="minimize">
              <rect x="2.500" y="5.500" width="9" height="3" fill="#fff" stroke="#4b5a6a" />
            </WindowButton>
            <WindowButton label="restore">
              <rect x="2.500" y="1.500" width="9" height="8" fill="#fff" stroke="#4b5a6a" />
              <rect x="5.500" y="4.500" width="3" height="2" fill="#9ab5d2" stroke="#4b5a6a" />
            </WindowButton>
            <WindowButton label="close" danger>
              <path d="M3 2l8 8M11 2l-8 8" stroke="#4a4a55" strokeWidth="4" />
              <path d="M3.500 2.500l7 7M10.500 2.500l-7 7" stroke="#fff" strokeWidth="2" />
            </WindowButton>
          </div>
        </header>
        <div className="border-t-2 border-r-2 border-b-2 border-l-2 border-t-[#7d7d7d] border-r-white border-b-white border-l-[#7d7d7d]">
          <Chart />
        </div>
      </div>
    </section>
  )
}

function StatusBar() {
  return (
    <footer className="flex h-[23px] shrink-0 items-end border-t-2 border-white text-[11px] leading-[18px]">
      <p className="flex-1 pl-0.5">F1キーでヘルプが表示されます</p>
      <span className="w-[116px] border-l border-[#a0a0a0] pl-[5px]">Default</span>
      <span className="w-[102px] border-l border-[#a0a0a0] pl-[5px]">2022.04.28 22:00</span>
      <span className="w-[71px] border-l border-[#a0a0a0] pl-[5px]">O: 130.888</span>
      <span className="w-[71px] border-l border-[#a0a0a0] pl-[5px]">H: 130.937</span>
      <span className="w-[68px] border-l border-[#a0a0a0] pl-[5px]">L: 130.813</span>
      <span className="w-[69px] border-l border-[#a0a0a0] pl-[5px]">C: 130.877</span>
      <span className="w-[66px] border-l border-[#a0a0a0] pl-[5px]">V: 4613</span>
      <span className="flex w-[127px] items-center gap-1 border-l border-[#a0a0a0] pl-[5px]">
        <svg width="23" height="14" viewBox="0 0 23 14" aria-hidden="true">
          <path d="M1 0v9M4 0v9M7 0v8M10 0v7M13 0v5M16 0v4M19 0v3M22 0v2" stroke="#6b7f12" strokeWidth="2" />
          <path d="M1 11v3M4 11v3M7 10v4M10 9v5M13 7v7M16 6v8M19 5v9M22 4v10" stroke="#123f66" strokeWidth="2" />
        </svg>
        54470/9 kb
      </span>
    </footer>
  )
}

// red frames, arrow and caption drawn over the terminal
function Annotation() {
  return (
    <div className="pointer-events-none absolute inset-0 overflow-hidden">
      <div className="absolute top-[47px] left-[307px] h-[33px] w-[35px] border-4 border-[#f80808] shadow-[2px_3px_4px_rgba(0,0,0,0.45)]" />
      <div className="absolute top-[45px] left-[418px] h-[33px] w-[37px] border-4 border-[#f80808] shadow-[2px_3px_4px_rgba(0,0,0,0.45)]" />
      <svg width="110" height="130" viewBox="325 82 110 130" className="absolute top-[82px] left-[325px] drop-shadow-md">
        <defs>
          <linearGradient id="fade" x1="340" y1="95" x2="424" y2="207" gradientUnits="userSpaceOnUse">
            <stop offset="0" stopColor="#fb0d0d" />
            <stop offset=".3" stopColor="#f01010" stopOpacity=".92" />
            <stop offset="1" stopColor="#d00000" stopOpacity=".12" />
          </linearGradient>
        </defs>
        <path d="M332 87l39 10-11 7 64 103-82-89-11 8z" fill="url(#fade)" />
      </svg>
      <p className="absolute top-[226px] left-[388px] text-[34px] leading-[39px] font-bold whitespace-nowrap text-[#ff0000] [paint-order:stroke_fill] drop-shadow-[1px_2px_1px_rgba(0,0,0,0.5)] [-webkit-text-stroke:7px_#fff] font-['Liberation_Sans','Noto_Sans_CJK_JP',sans-serif]">
        <span className="text-[33px]">④これで「USDJPY」のチャートができました。</span>
        <br />
        次は<span className="[font-feature-settings:normal]">、</span>時間足を「H1」から「M1」に切り替えます。
      </p>
    </div>
  )
}

export default function App() {
  return (
    <div className="relative flex h-screen flex-col overflow-hidden bg-[#f0f0f0] font-['Noto_Sans','Noto_Sans_CJK_JP',sans-serif] text-black [font-feature-settings:'palt']">
      <MenuBar />
      <MainToolbar />
      <DrawToolbar />
      <div className="flex min-h-0 flex-1">
        <MarketWatch />
        <main className="relative flex-1 overflow-hidden border-t border-b border-l-2 border-t-[#696969] border-b-[#d0d0d0] border-l-[#696969] bg-[#ababab]">
          <ChartWindow />
        </main>
      </div>
      <StatusBar />
      <Annotation />
    </div>
  )
}
